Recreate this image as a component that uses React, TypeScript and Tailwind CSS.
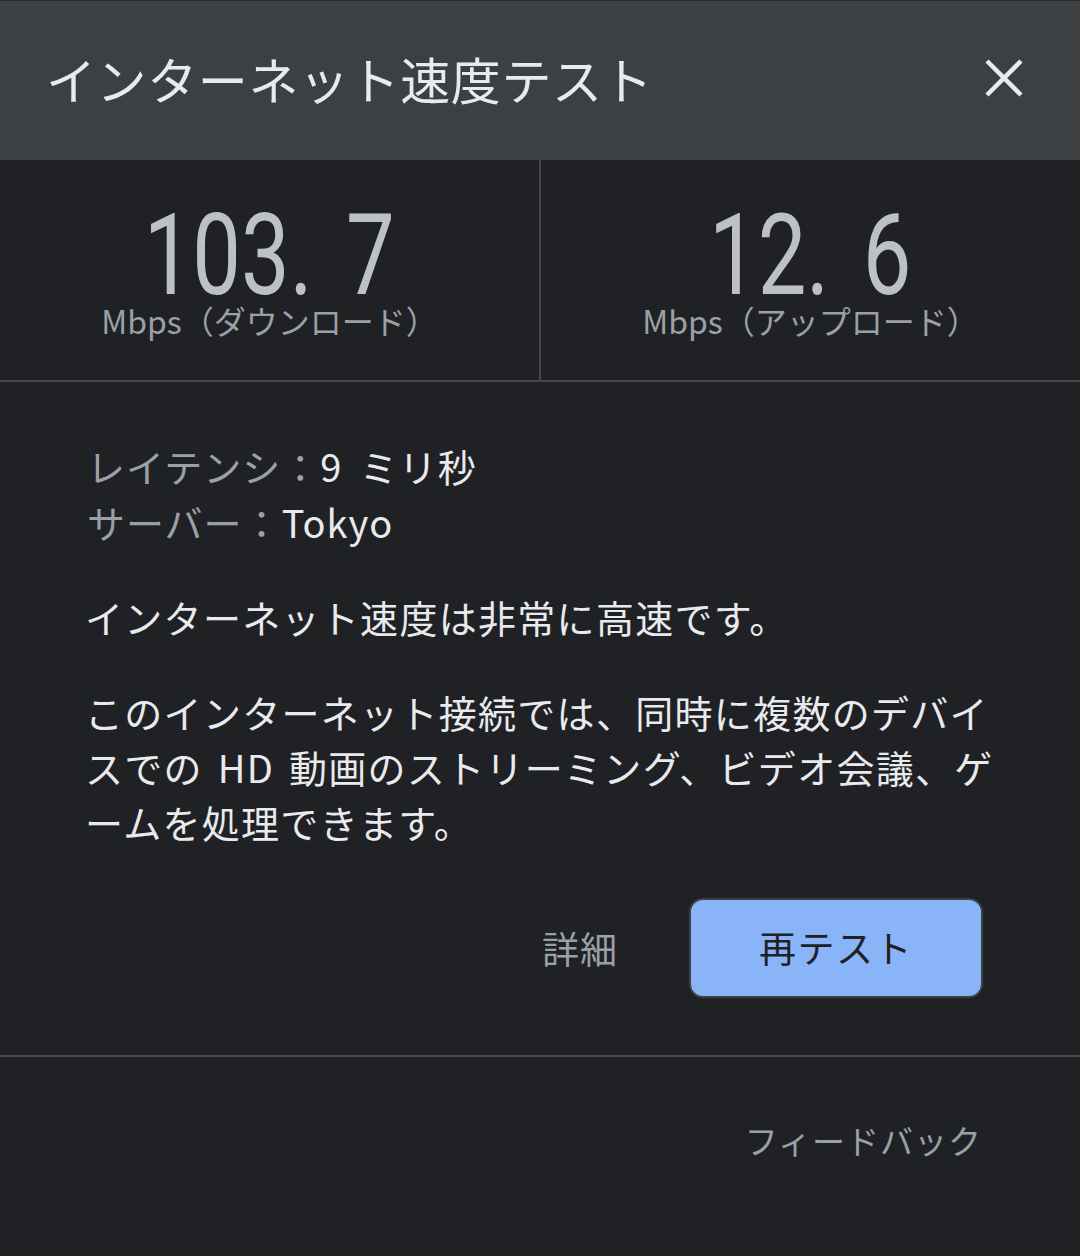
import React from "react";

const CJK = "font-['Noto_Sans_CJK_JP',sans-serif]";

function Stat({ whole, frac, label }: { whole: string; frac: string; label: string }) {
  return (
    <div className="flex flex-1 flex-col items-center pt-[50px]">
      <div className="h-[90px] leading-[90px] text-[114px] text-[#bdc1c6] font-['Roboto',sans-serif] whitespace-nowrap">
        <span className="inline-block scale-x-[0.76]">
          {whole}
          <span className="mr-[44px]">.</span>
          {frac}
        </span>
      </div>
      <div className={`mt-[2px] text-[32px] leading-[36px] text-[#9aa0a6] whitespace-nowrap ${CJK}`}>{label}</div>
    </div>
  );
}

export default function App() {
  return (
    <div className={`w-[1080px] h-[1256px] bg-[#202124] flex flex-col ${CJK}`}>
      <header className="h-[160px] bg-[#3c4043] border-t border-[#2a2b2e] flex items-center justify-between pl-[46px] pr-[57px]">
        <h1 className="mb-[6px] text-[50px] leading-[60px] tracking-[0.6px] text-[#e8eaed] font-normal">インターネット速度テスト</h1>
        <svg width="38" height="38" viewBox="0 0 38 38" className="mb-[6px]" aria-label="閉じる">
          <path d="M2 2 L36 36 M36 2 L2 36" stroke="#e8eaed" strokeWidth="4.5" strokeLinecap="butt" />
        </svg>
      </header>

      <section className="h-[222px] flex border-b-2 border-[#45474a]">
        <Stat whole="103" frac="7" label="Mbps（ダウンロード）" />
        <div className="w-[2px] bg-[#45474a]" />
        <Stat whole="12" frac="6" label="Mbps（アップロード）" />
      </section>

      <section className="pl-[87px] pr-[85px] pt-[56px] flex flex-col">
        <div className="text-[38px] leading-[56px] tracking-[1px]">
          <div>
            <span className="text-[#9aa0a6]">レイテンシ：</span>
            <span className="text-[#e8eaed] [word-spacing:8px]">9 ミリ秒</span>
          </div>
          <div>
            <span className="text-[#9aa0a6]">サーバー：</span>
            <span className="text-[#e8eaed]">Tokyo</span>
          </div>
        </div>
        <p className="-ml-[2px] mt-[39px] text-[38px] leading-[55px] tracking-[1.3px] text-[#e8eaed]">インターネット速度は非常に高速です。</p>
        <p className="-ml-[2px] mt-[40px] text-[38px] leading-[55px] tracking-[1.3px] [word-spacing:5px] text-[#e8eaed] whitespace-nowrap">
          このインターネット接続では、同時に複数のデバイ
          <br />
          スでの HD 動画のストリーミング、ビデオ会議、ゲ
          <br />
          ームを処理できます。
        </p>
        <div className="mt-[49px] flex items-center justify-end gap-[71px] pr-[12px]">
          <button className="text-[37px] leading-[44px] tracking-[1px] text-[#9aa0a6]">詳細</button>
          <button className="w-[294px] h-[100px] rounded-[14px] bg-[#8ab4f8] border-2 border-[#3c4043] text-[37px] tracking-[1.5px] text-[#202124]">
            再テスト
          </button>
        </div>
      </section>

      <div className="mt-[57px] h-[2px] bg-[#45474a]" />

      <footer className="flex justify-end pr-[98px] pt-[63px]">
        <span className="text-[33px] leading-[40px] tracking-[1px] text-[#9aa0a6]">フィードバック</span>
      </footer>
    </div>
  );
}
